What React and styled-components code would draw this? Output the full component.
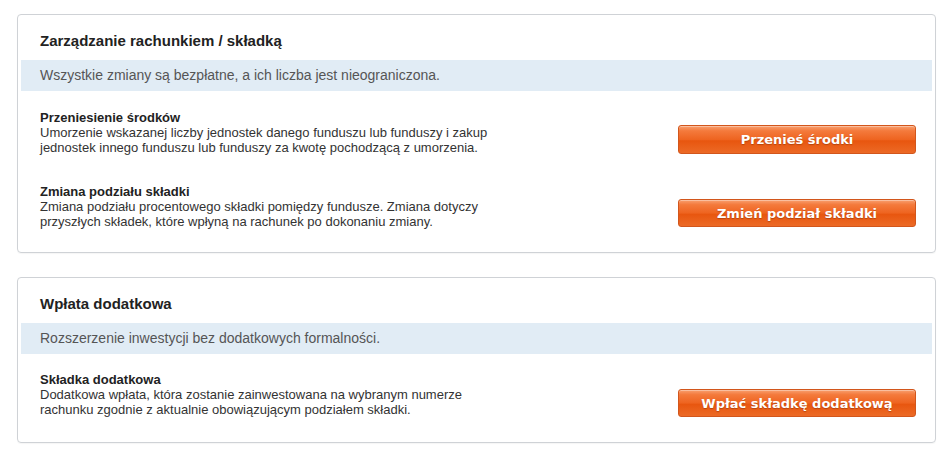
import React from 'react';
import styled, { createGlobalStyle } from 'styled-components';

const GlobalStyle = createGlobalStyle`
    body {
        margin: 0;
        background: #fff;
        font-family: "Liberation Sans", Arial, sans-serif;
    }
`;

const Page = styled.div`
    display: flex;
    flex-direction: column;
    gap: 24px;
    padding: 14px 16px 12px 17px;
`;

const Card = styled.section`
    border: 1px solid #cfd2d6;
    border-radius: 4px;
    padding: 0 3px ${props => props.$bottom}px;
    box-shadow: 0 1px 1px rgba(0, 0, 0, 0.04);
`;

const CardTitle = styled.h2`
    margin: 0;
    height: 45px;
    line-height: 51px;
    padding-left: 19px;
    font-size: 15px;
    font-weight: bold;
    color: #222;
`;

const Banner = styled.div`
    height: 31px;
    line-height: 31px;
    padding-left: 19px;
    background: #e1ecf5;
    font-size: 14px;
    color: #555;
`;

const Items = styled.div`
    display: flex;
    flex-direction: column;
    gap: 29px;
    padding: ${props => props.$top}px 16px 0 19px;
`;

const Item = styled.div`
    display: flex;
    justify-content: space-between;
    align-items: flex-end;
`;

const ItemText = styled.div`
    max-width: 465px;
    font-size: 13px;
    line-height: 15px;
    color: #333;
`;

const ItemTitle = styled.div`
    font-weight: bold;
    color: #222;
`;

const OrangeButton = styled.button`
    width: 238px;
    height: ${props => props.$h}px;
    margin-bottom: ${props => props.$mb}px;
    flex-shrink: 0;
    border: 1px solid #d2561c;
    border-radius: 3px;
    background: linear-gradient(to bottom, #f8a070 0%, #f47a3c 18%, #ee6420 50%, #e8560f 55%, #ec6a26 100%);
    box-shadow: inset 0 1px 0 rgba(255, 255, 255, 0.35);
    color: #fff;
    font-family: "DejaVu Sans", Verdana, sans-serif;
    font-weight: bold;
    font-size: 13px;
    text-shadow: 0 1px 1px rgba(120, 40, 0, 0.45);
    cursor: pointer;
    padding: 0;
`;

const sections = [
    {
        title: 'Zarządzanie rachunkiem / składką',
        banner: 'Wszystkie zmiany są bezpłatne, a ich liczba jest nieograniczona.',
        top: 19,
        bottom: 23,
        items: [
            {
                title: 'Przeniesienie środków',
                text: 'Umorzenie wskazanej liczby jednostek danego funduszu lub funduszy i zakup jednostek innego funduszu lub funduszy za kwotę pochodzącą z umorzenia.',
                button: 'Przenieś środki',
                h: 29,
                mb: 1,
            },
            {
                title: 'Zmiana podziału składki',
                text: 'Zmiana podziału procentowego składki pomiędzy fundusze. Zmiana dotyczy przyszłych składek, które wpłyną na rachunek po dokonaniu zmiany.',
                button: 'Zmień podział składki',
                h: 28,
                mb: 2,
            },
        ],
    },
    {
        title: 'Wpłata dodatkowa',
        banner: 'Rozszerzenie inwestycji bez dodatkowych formalności.',
        top: 18,
        bottom: 25,
        items: [
            {
                title: 'Składka dodatkowa',
                text: 'Dodatkowa wpłata, która zostanie zainwestowana na wybranym numerze rachunku zgodnie z aktualnie obowiązującym podziałem składki.',
                button: 'Wpłać składkę dodatkową',
                h: 28,
                mb: 0,
            },
        ],
    },
];

export default function App() {
    return (
        <>
            <GlobalStyle />
            <Page>
                {sections.map(section => (
                    <Card key={section.title} $bottom={section.bottom}>
                        <CardTitle>{section.title}</CardTitle>
                        <Banner>{section.banner}</Banner>
                        <Items $top={section.top}>
                            {section.items.map(item => (
                                <Item key={item.title}>
                                    <ItemText>
                                        <ItemTitle>{item.title}</ItemTitle>
                                        {item.text}
                                    </ItemText>
                                    <OrangeButton $h={item.h} $mb={item.mb}>{item.button}</OrangeButton>
                                </Item>
                            ))}
                        </Items>
                    </Card>
                ))}
            </Page>
        </>
    );
}
